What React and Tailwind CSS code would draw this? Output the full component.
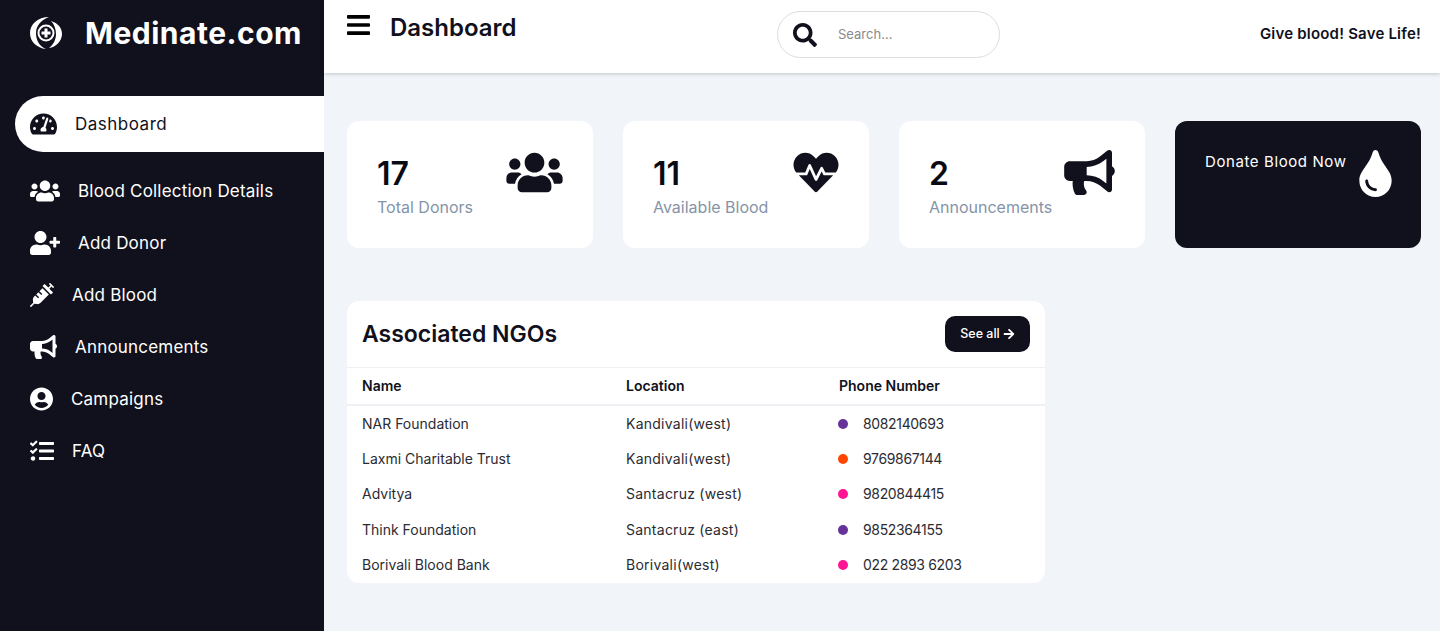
import React from 'react';
import {
  FaTachometerAlt, FaUsers, FaUserPlus, FaSyringe, FaBullhorn, FaUserCircle,
  FaTasks, FaBars, FaSearch, FaHeartbeat, FaTint, FaArrowRight,
} from 'react-icons/fa';

// Sidebar links, the icon width follows the icon's own aspect ratio
const navLinks = [
  { icon: <FaUsers className="w-[30px] h-6" />, name: 'Blood Collection Details' },
  { icon: <FaUserPlus className="w-[30px] h-6" />, name: 'Add Donor' },
  { icon: <FaSyringe className="w-6 h-6" />, name: 'Add Blood' },
  { icon: <FaBullhorn className="w-[27px] h-6" />, name: 'Announcements' },
  { icon: <FaUserCircle className="w-[23px] h-6" />, name: 'Campaigns' },
  { icon: <FaTasks className="w-6 h-6" />, name: 'FAQ' },
];

const stats = [
  { value: '17', label: 'Total Donors', icon: <FaUsers className="w-[57px] h-[45px] -mt-px text-[#10111c]" /> },
  { value: '11', label: 'Available Blood', icon: <FaHeartbeat className="w-[46px] h-[45px] -mt-px text-[#10111c]" /> },
  { value: '2', label: 'Announcements', icon: <FaBullhorn className="w-[51px] h-[45px] -mt-px text-[#10111c]" /> },
];

const ngos = [
  { name: 'NAR Foundation', location: 'Kandivali(west)', phone: '8082140693', dot: 'bg-[#663399]' },
  { name: 'Laxmi Charitable Trust', location: 'Kandivali(west)', phone: '9769867144', dot: 'bg-[#ff4500]' },
  { name: 'Advitya', location: 'Santacruz (west)', phone: '9820844415', dot: 'bg-[#ff1493]' },
  { name: 'Think Foundation', location: 'Santacruz (east)', phone: '9852364155', dot: 'bg-[#663399]' },
  { name: 'Borivali Blood Bank', location: 'Borivali(west)', phone: '022 2893 6203', dot: 'bg-[#ff1493]' },
];

const Logo = () => (
  <svg viewBox="0 0 32 32" className="w-8 h-8 shrink-0 text-white" fill="none">
    <path d="M19 0C8 0 0 7 0 16c0 9 7 15 16 16-7-3-10-9-10-16C6 9 11 3 19 0Z" fill="currentColor" />
    <path d="M21 4c7 2 11 7 11 13 0 7-6 13-13 14 4-3 7-8 7-14 0-5-2-10-5-13Z" fill="currentColor" />
    <circle cx="16" cy="16" r="7.5" stroke="currentColor" strokeWidth="2" />
    <path d="M14.5 11.5h3v3h3v3h-3v3h-3v-3h-3v-3h3z" fill="currentColor" />
  </svg>
);

const Sidebar = () => (
  <aside className="w-[324px] shrink-0 bg-[#10111c] text-white">
    <div className="flex items-center h-[66px] pl-[30px] gap-[23px]">
      <Logo />
      <h1 className="text-[30px] font-bold tracking-[0.5px]">Medinate.com</h1>
    </div>
    <nav className="pt-[30px] pl-[15px]">
      <div className="flex items-center gap-[18px] h-14 pl-[15px] bg-white text-[#10111c] rounded-l-[28px]">
        <FaTachometerAlt className="w-[27px] h-6" />
        <span className="pt-0.5 text-[17px] tracking-[0.5px]">Dashboard</span>
      </div>
      <div className="pt-[13px]">
        {navLinks.map((link) => (
          <div key={link.name} className="flex items-center gap-[18px] h-[52px] pl-[15px]">
            {link.icon}
            <span className="pt-0.5 text-[17px] tracking-[0.2px]">{link.name}</span>
          </div>
        ))}
      </div>
    </nav>
  </aside>
);

const Header = () => (
  <header className="flex h-[73px] pl-[23px] pr-[19px] bg-white shadow-[0_1px_4px_rgba(0,0,0,0.2)]">
    <div className="flex items-start w-[430px] pt-[11px] gap-5">
      <FaBars className="w-[23px] h-7" />
      <h2 className="mt-px text-2xl font-semibold text-[#10111c]">Dashboard</h2>
    </div>
    <div className="flex items-center w-[223px] h-[47px] mt-[11px] pl-[15px] gap-[21px] border border-[#dddddd] rounded-3xl">
      <FaSearch className="w-6 h-6 text-[#10111c]" />
      <span className="text-[13px] text-[#8a8a8a]">Search...</span>
    </div>
    <p className="ml-auto pt-[23px] text-[15px] font-semibold tracking-[0.2px] text-[#10111c]">Give blood! Save Life!</p>
  </header>
);

const StatCard = ({ stat }) => (
  <div className="flex justify-between items-start h-[127px] p-[30px] bg-white rounded-xl">
    <div>
      <div className="text-[32px] leading-[45px] font-semibold text-[#0a0a12]">{stat.value}</div>
      <div className="text-base leading-[22px] text-[#8594a8]">{stat.label}</div>
    </div>
    {stat.icon}
  </div>
);

const NgoTable = () => (
  <div className="w-[698px] h-[282px] mt-[53px] bg-white rounded-xl overflow-hidden">
    <div className="flex justify-between items-center h-[67px] px-[15px] border-b border-[#eef0f4]">
      <h3 className="text-[23px] font-semibold text-[#10111c]">Associated NGOs</h3>
      <button className="flex justify-center items-center gap-[3px] w-[85px] h-9 rounded-[10px] bg-[#10111c] text-white text-[12.5px] font-medium">
        See all <FaArrowRight className="w-3 h-3" />
      </button>
    </div>
    <table className="w-full text-left">
      <thead>
        <tr className="h-[37px] border-b-2 border-[#eef0f4] text-sm font-semibold text-[#10111c]">
          <th className="w-[279px] pl-[15px] font-semibold">Name</th>
          <th className="w-[213px] font-semibold">Location</th>
          <th className="font-semibold">Phone Number</th>
        </tr>
      </thead>
      <tbody className="text-sm text-[#2b2b33]">
        {ngos.map((ngo) => (
          <tr key={ngo.name} className="h-[35.3px]">
            <td className="pt-0.5 pl-[15px]">{ngo.name}</td>
            <td className="pt-0.5 tracking-[0.25px]">{ngo.location}</td>
            <td className="pt-0.5">
              <div className="flex items-center gap-[15px] -ml-px tracking-[-0.35px]">
                <span className={`w-2.5 h-2.5 rounded-full ${ngo.dot}`} />
                {ngo.phone}
              </div>
            </td>
          </tr>
        ))}
      </tbody>
    </table>
  </div>
);

export default function App() {
  return (
    <div className="flex h-[631px] overflow-hidden bg-[#f1f5f9] font-['Inter',sans-serif]">
      <Sidebar />
      <div className="flex-1 min-w-0">
        <Header />
        <main className="pt-12 pl-[23px] pr-[19px]">
          <div className="grid grid-cols-4 gap-[30px]">
            {stats.map((stat) => (
              <StatCard key={stat.label} stat={stat} />
            ))}
            <div className="flex justify-between items-start h-[127px] p-[30px] pr-[29px] bg-[#10111c] text-white rounded-xl">
              <span className="text-[15px] tracking-[0.6px]">Donate Blood Now</span>
              <FaTint className="-mt-px w-[33px] h-[47px]" />
            </div>
          </div>
          <NgoTable />
        </main>
      </div>
    </div>
  );
}
